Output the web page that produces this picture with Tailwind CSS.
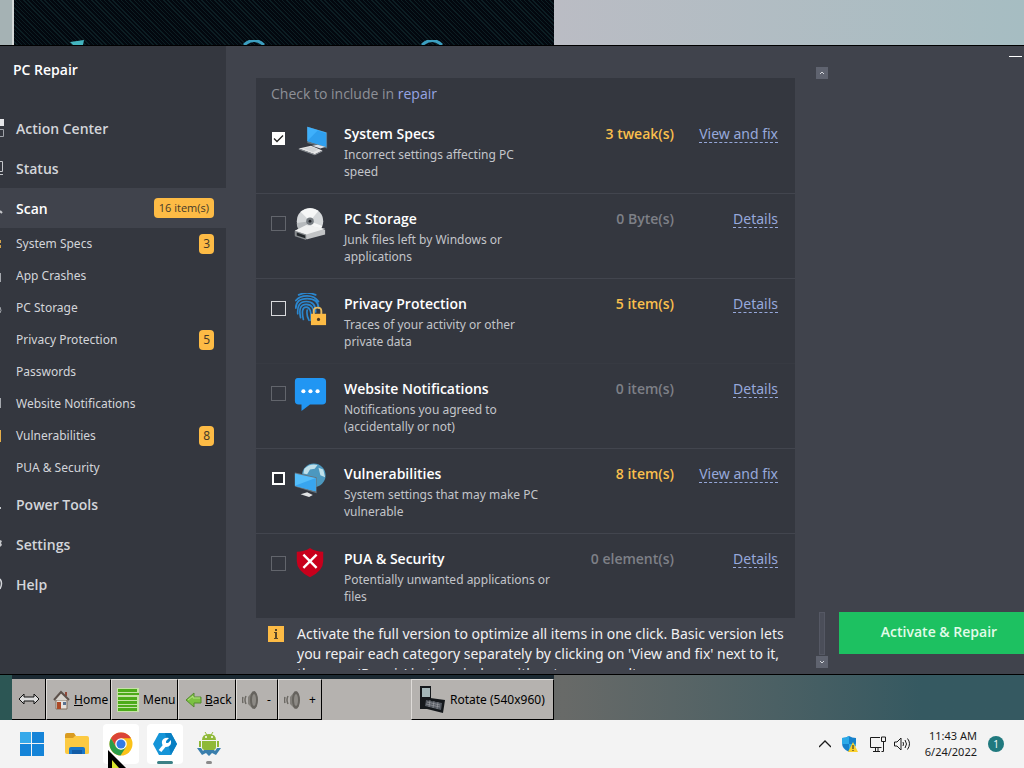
<!DOCTYPE html>
<html lang="en">
<head>
    <meta charset="UTF-8">
    <meta name="viewport" content="width=device-width, initial-scale=1.0">
    <title>PC Repair</title>
    <script src="https://cdn.jsdelivr.net/npm/@tailwindcss/browser@4"></script>
</head>
<body class="h-screen overflow-hidden flex flex-col bg-[#40434c] font-['Open_Sans','Noto_Sans',sans-serif] text-white">

    <!-- wallpaper and the top of the emulator window -->
    <div class="h-[45px] shrink-0 flex bg-linear-to-r from-[#a4b2b4] via-[#bcbcc4] to-[#a6bdc2]">
        <div class="w-3 bg-[#a5b2b4]"></div>
        <div class="w-[542px] border-l-2 border-[#d4d8d8] bg-[#03080f] bg-[repeating-linear-gradient(45deg,#03080f_0px,#03080f_2px,#0c1e23_2px,#0c1e23_3px)] flex items-end">
            <svg class="w-full h-[5px]" viewBox="0 0 540 5" preserveAspectRatio="xMinYMax slice">
                <path d="M56 2l14-2-1 5H59z" fill="#43b5c0"/>
                <path d="M230 5q10-9 20 0M408 5q10-9 20 0" fill="none" stroke="#3c9fc0" stroke-width="3"/>
            </svg>
        </div>
    </div>

    <!-- repair app -->
    <div class="flex-1 min-h-0 flex border-y border-black overflow-hidden">
        <aside class="w-[226px] shrink-0 bg-[#34373f] text-[#d3d5da]">
            <h1 class="h-[62px] pt-3 pl-[13px] text-[14px] leading-6 font-semibold text-white">PC Repair</h1>
            <nav class="text-[12px]">
                <a href="#" class="h-10 flex items-center gap-[11px] text-[14px] font-semibold">
                    <svg class="w-[5px] h-5" viewBox="0 0 5 20"><path d="M0 1h4v7H0z" fill="#e4e5e8"/><path d="M0 11.500h3.500v7H0" fill="none" stroke="#9fa2a8"/></svg>
                    Action Center
                </a>
                <a href="#" class="h-10 flex items-center gap-[11px] text-[14px] font-semibold">
                    <svg class="w-[5px] h-5" viewBox="0 0 5 20"><path d="M0 3.500h2.500v10H0M0 16.500h3" fill="none" stroke="#c5c7cb"/></svg>
                    Status
                </a>
                <a href="#" class="h-10 pr-3 flex items-center gap-[11px] text-[14px] font-semibold text-white bg-[#40434c]">
                    <svg class="w-[5px] h-5" viewBox="0 0 5 20"><path d="M0 13l2 2" stroke="#c5c7cb" stroke-width="2"/></svg>
                    Scan
                    <span class="ml-auto h-5 px-[5px] rounded bg-[#fdbb45] text-[11px] leading-5 font-normal text-[#453a29]">16 item(s)</span>
                </a>
                <div class="font-['Noto_Sans',sans-serif]">
                    <a href="#" class="h-8 pr-3 flex items-center gap-[11px]">
                        <svg class="w-[5px] h-5" viewBox="0 0 5 20"><path d="M0 6h1v3H0zM0 11h1v3H0z" fill="#d3a34b"/></svg>
                        System Specs
                        <span class="ml-auto h-5 px-1 rounded bg-[#fdbb45] leading-5 text-[#453a29]">3</span>
                    </a>
                    <a href="#" class="h-8 flex items-center gap-[11px]">
                        <svg class="w-[5px] h-5" viewBox="0 0 5 20"><path d="M.5 7v9" stroke="#a5a8ae"/></svg>
                        App Crashes
                    </a>
                    <a href="#" class="h-8 flex items-center gap-[11px]">
                        <svg class="w-[5px] h-5" viewBox="0 0 5 20"><path d="M0 9q2 4 0 6" fill="none" stroke="#a5a8ae"/></svg>
                        PC Storage
                    </a>
                    <a href="#" class="h-8 pr-3 pl-4 flex items-center">
                        Privacy Protection
                        <span class="ml-auto h-5 px-1 rounded bg-[#fdbb45] leading-5 text-[#453a29]">5</span>
                    </a>
                    <a href="#" class="h-8 pl-4 flex items-center">Passwords</a>
                    <a href="#" class="h-8 flex items-center gap-[11px]">
                        <svg class="w-[5px] h-5" viewBox="0 0 5 20"><path d="M.5 4v10" stroke="#a5a8ae"/></svg>
                        Website Notifications
                    </a>
                    <a href="#" class="h-8 pr-3 flex items-center gap-[11px]">
                        <svg class="w-[5px] h-5" viewBox="0 0 5 20"><path d="M.5 4v12" stroke="#e5ae49"/></svg>
                        Vulnerabilities
                        <span class="ml-auto h-5 px-1 rounded bg-[#fdbb45] leading-5 text-[#453a29]">8</span>
                    </a>
                    <a href="#" class="h-8 pl-4 flex items-center">PUA &amp; Security</a>
                </div>
                <a href="#" class="h-10 flex items-center gap-[11px] text-[14px] font-semibold">
                    <svg class="w-[5px] h-5" viewBox="0 0 5 20"><path d="M0 13h1v2H0z" fill="#c5c7cb"/></svg>
                    Power Tools
                </a>
                <a href="#" class="h-10 flex items-center gap-[11px] text-[14px] font-semibold">
                    <svg class="w-[5px] h-5" viewBox="0 0 5 20"><path d="M0 6l2 1-1 2 1 2-2 2z" fill="#c5c7cb"/></svg>
                    Settings
                </a>
                <a href="#" class="h-10 flex items-center gap-[11px] text-[14px] font-semibold">
                    <svg class="w-[5px] h-5" viewBox="0 0 5 20"><path d="M0 5q3 4 0 10" fill="none" stroke="#d3d5da" stroke-width="1.500"/></svg>
                    Help
                </a>
            </nav>
        </aside>

        <main class="flex-1 min-w-0 flex pl-[30px] pb-1">
            <div class="w-[539px] pt-8 overflow-hidden">
                <section class="bg-[#34373f] mb-[6px] pb-[1px]">
                    <p class="h-[31px] px-[15px] text-[14px] leading-8 text-[#8e9097]">Check to include in <a href="#" class="text-[#97a5e4]">repair</a></p>

                    <div class="h-[85px] flex items-start pt-[14px] pl-[15px] pr-[17px] border-b border-[#42454e]">
                        <label class="relative mt-2 w-[15px] h-[15px] shrink-0">
                            <input type="checkbox" checked aria-label="System Specs" class="block appearance-none w-[15px] h-[15px] bg-white border border-[#34373f]">
                            <svg class="absolute inset-0 w-[15px] h-[15px]" viewBox="0 0 15 15"><path d="M3 7.500l3 3 6-6" fill="none" stroke="#222" stroke-width="1.300"/></svg>
                        </label>
                        <svg class="ml-[9px] mt-[1px] w-[34px] h-[34px] shrink-0" viewBox="0 0 36 36">
                            <path d="M13 3l21 6v17l-21-6z" fill="#60727f"/>
                            <path d="M13 3l20 6v15l-20-6z" fill="#3eb0fb"/>
                            <path d="M13 18L24 7l9 3v14z" fill="#2f9fee"/>
                            <path d="M18 23l6-1 8 2-5 2z" fill="#dce1e8"/>
                            <path d="M4 26l13-3 12 5-8 4z" fill="#e5e5e6"/>
                            <path d="M4 26l17 6 8-4v1l-8 4-17-6z" fill="#8f949a"/>
                            <path d="M9 26l8-2 8 3-6 3z" fill="#d2d4d6"/>
                        </svg>
                        <div class="ml-[15px] flex-1">
                            <h2 class="text-[14px] leading-[22px] font-semibold">System Specs</h2>
                            <p class="mt-[1px] font-['Noto_Sans',sans-serif] text-[12px] leading-[17px] text-[#c3c5ca]">Incorrect settings affecting PC<br>speed</p>
                        </div>
                        <span class="text-[14px] leading-[22px] font-semibold text-[#f9bf4d]">3 tweak(s)</span>
                        <div class="mt-[2px] w-[104px] text-right font-['Noto_Sans',sans-serif] text-[14px] leading-[17px]"><a href="#" class="inline-block border-b border-dashed border-[#97a9dc] text-[#97a9dc]">View and fix</a></div>
                    </div>

                    <div class="h-[85px] flex items-start pt-[14px] pl-[15px] pr-[17px] border-b border-[#42454e]">
                        <input type="checkbox" aria-label="PC Storage" class="mt-2 appearance-none w-[15px] h-[15px] shrink-0 border border-[#62656c]">
                        <svg class="ml-[7px] w-[34px] h-[34px] shrink-0" viewBox="0 0 36 36">
                            <circle cx="18" cy="14" r="14" fill="#d5d8da"/>
                            <path d="M18 14L8 4q9-7 19-1zM18 14l13 5q-3 8-9 8z" fill="#f6f7f7"/>
                            <path d="M18 14L4 16q0 6 4 9z" fill="#b6babd"/>
                            <circle cx="18" cy="14" r="4" fill="#757b80"/>
                            <circle cx="18" cy="14" r="1.500" fill="#25282d"/>
                            <path d="M2 24l12-6 20 5v5l-19 5-13-4z" fill="#c1c3c5"/>
                            <path d="M2 24l12-6 20 4-20 6z" fill="#f0f1f1"/>
                            <path d="M2 24l12 4v6L2 30z" fill="#878b8e"/>
                            <path d="M4 26l9 3v3l-9-3z" fill="#24282c"/>
                        </svg>
                        <div class="ml-[17px] flex-1">
                            <h2 class="text-[14px] leading-[22px] font-semibold">PC Storage</h2>
                            <p class="mt-[1px] font-['Noto_Sans',sans-serif] text-[12px] leading-[17px] text-[#c3c5ca]">Junk files left by Windows or<br>applications</p>
                        </div>
                        <span class="text-[14px] leading-[22px] font-semibold text-[#7e8087]">0 Byte(s)</span>
                        <div class="mt-[2px] w-[104px] text-right font-['Noto_Sans',sans-serif] text-[14px] leading-[17px]"><a href="#" class="inline-block border-b border-dashed border-[#97a9dc] text-[#97a9dc]">Details</a></div>
                    </div>

                    <div class="h-[85px] flex items-start pt-[14px] pl-[15px] pr-[17px] border-b border-[#373a42]">
                        <input type="checkbox" aria-label="Privacy Protection" class="mt-2 appearance-none w-[15px] h-[15px] shrink-0 border border-[#d9dadd]">
                        <svg class="ml-[7px] w-[34px] h-[34px] shrink-0" viewBox="0 0 36 36">
                            <g fill="none" stroke="#2b87cf" stroke-width="1.800" stroke-linecap="round">
                                <path d="M6 2q9-4 18 0M3 8q4-5 12-5t12 6M3 16q0-10 12-10t12 10M5 22q-1-13 9-13t10 11M8 26q-3-14 6-14t8 13M11 28q-3-13 3-13t5 14M15 18q-1 6 2 11"/>
                            </g>
                            <path d="M22 23v-4q0-3.500 4-3.500t4 3.500v4" fill="none" stroke="#e7b95f" stroke-width="2"/>
                            <path d="M19 22h16v12H19z" fill="#fdbb45"/>
                            <circle cx="27" cy="28" r="1.700" fill="#4b3925"/>
                        </svg>
                        <div class="ml-[17px] flex-1">
                            <h2 class="text-[14px] leading-[22px] font-semibold">Privacy Protection</h2>
                            <p class="mt-[1px] font-['Noto_Sans',sans-serif] text-[12px] leading-[17px] text-[#c3c5ca]">Traces of your activity or other<br>private data</p>
                        </div>
                        <span class="text-[14px] leading-[22px] font-semibold text-[#f9bf4d]">5 item(s)</span>
                        <div class="mt-[2px] w-[104px] text-right font-['Noto_Sans',sans-serif] text-[14px] leading-[17px]"><a href="#" class="inline-block border-b border-dashed border-[#97a9dc] text-[#97a9dc]">Details</a></div>
                    </div>

                    <div class="h-[85px] flex items-start pt-[14px] pl-[15px] pr-[17px] border-b border-[#42454e]">
                        <input type="checkbox" aria-label="Website Notifications" class="mt-2 appearance-none w-[15px] h-[15px] shrink-0 border border-[#62656c]">
                        <svg class="ml-[7px] w-[34px] h-[34px] shrink-0" viewBox="0 0 36 36">
                            <path d="M5 0h26q4 0 4 4v20q0 4-4 4H18l-9 7v-7H6q-4 0-4-4V4q0-4 3-4z" fill="#2196f3"/>
                            <g fill="#fff"><circle cx="11" cy="14" r="2.200"/><circle cx="18.500" cy="14" r="2.200"/><circle cx="26" cy="14" r="2.200"/></g>
                        </svg>
                        <div class="ml-[17px] flex-1">
                            <h2 class="text-[14px] leading-[22px] font-semibold">Website Notifications</h2>
                            <p class="mt-[1px] font-['Noto_Sans',sans-serif] text-[12px] leading-[17px] text-[#c3c5ca]">Notifications you agreed to<br>(accidentally or not)</p>
                        </div>
                        <span class="text-[14px] leading-[22px] font-semibold text-[#7e8087]">0 item(s)</span>
                        <div class="mt-[2px] w-[104px] text-right font-['Noto_Sans',sans-serif] text-[14px] leading-[17px]"><a href="#" class="inline-block border-b border-dashed border-[#97a9dc] text-[#97a9dc]">Details</a></div>
                    </div>

                    <div class="h-[85px] flex items-start pt-[14px] pl-[15px] pr-[17px] border-b border-[#42454e]">
                        <div class="mt-2 w-[15px] h-[15px] shrink-0 p-[1px]">
                            <input type="checkbox" aria-label="Vulnerabilities" class="block appearance-none w-[13px] h-[13px] border-2 border-white bg-[#272a31]">
                        </div>
                        <svg class="ml-[7px] w-[34px] h-[34px] shrink-0" viewBox="0 0 36 36">
                            <circle cx="22" cy="13" r="12.500" fill="#4c98bf"/>
                            <path d="M12 6q6-6 14-4l-3 4-5 1-3 5-4-1zM27 5l5 2 2 8-5-2z" fill="#bfe0ea"/>
                            <path d="M2 10l23 5v17L2 25z" fill="#657580"/>
                            <path d="M2 11l22 5v14L2 24z" fill="#54bdfa"/>
                            <path d="M2 24l22-8v14z" fill="#38a5ef"/>
                            <path d="M8 33l7-2 6 3-4 2z" fill="#e1e3e4"/>
                        </svg>
                        <div class="ml-[17px] flex-1">
                            <h2 class="text-[14px] leading-[22px] font-semibold">Vulnerabilities</h2>
                            <p class="mt-[1px] font-['Noto_Sans',sans-serif] text-[12px] leading-[17px] text-[#c3c5ca]">System settings that may make PC<br>vulnerable</p>
                        </div>
                        <span class="text-[14px] leading-[22px] font-semibold text-[#f9bf4d]">8 item(s)</span>
                        <div class="mt-[2px] w-[104px] text-right font-['Noto_Sans',sans-serif] text-[14px] leading-[17px]"><a href="#" class="inline-block border-b border-dashed border-[#97a9dc] text-[#97a9dc]">View and fix</a></div>
                    </div>

                    <div class="h-[83px] flex items-start pt-[14px] pl-[15px] pr-[17px]">
                        <input type="checkbox" aria-label="PUA &amp; Security" class="mt-2 appearance-none w-[15px] h-[15px] shrink-0 border border-[#62656c]">
                        <svg class="ml-[7px] w-[34px] h-[34px] shrink-0" viewBox="0 0 36 36">
                            <path d="M18 0q6 4 14 4v10q0 10-14 17Q4 24 4 14V4q8 0 14-4z" fill="#c8001c"/>
                            <path d="M11 7l14 14M25 7L11 21" stroke="#fff" stroke-width="2.500"/>
                        </svg>
                        <div class="ml-[17px] flex-1">
                            <h2 class="text-[14px] leading-[22px] font-semibold">PUA &amp; Security</h2>
                            <p class="mt-[1px] font-['Noto_Sans',sans-serif] text-[12px] leading-[17px] text-[#c3c5ca]">Potentially unwanted applications or<br>files</p>
                        </div>
                        <span class="text-[14px] leading-[22px] font-semibold text-[#7e8087]">0 element(s)</span>
                        <div class="mt-[2px] w-[104px] text-right font-['Noto_Sans',sans-serif] text-[14px] leading-[17px]"><a href="#" class="inline-block border-b border-dashed border-[#97a9dc] text-[#97a9dc]">Details</a></div>
                    </div>
                </section>

                <div class="flex items-start gap-[13px] pl-3">
                    <svg class="mt-[2px] w-4 h-4 shrink-0" viewBox="0 0 16 16"><path d="M0 0h16v16H0z" fill="#fdbb45"/><path d="M7 3h2v2H7zM6 6h3v6h1v1H6v-1h1V7H6z" fill="#5a4628"/></svg>
                    <p class="font-['Noto_Sans',sans-serif] text-[14px] leading-5 whitespace-nowrap text-[#f0f0f2]">Activate the full version to optimize all items in one click. Basic version lets<br>you repair each category separately by clicking on 'View and fix' next to it,<br>then use 'Repair' in the window with category results.</p>
                </div>
            </div>

            <!-- scrollbar -->
            <div class="ml-[21px] mt-[21px] w-3 flex flex-col items-center">
                <button aria-label="Scroll up" class="w-3 h-3 bg-[#5f636f]"><svg viewBox="0 0 12 12"><path d="M4 7l2-2 2 2" fill="none" stroke="#d5d7dc"/></svg></button>
                <div class="mt-auto w-[6px] h-[43px] border border-[#555864] bg-[#4b4e59]"></div>
                <button aria-label="Scroll down" class="mt-[1px] mb-[2px] w-3 h-3 bg-[#5f636f]"><svg viewBox="0 0 12 12"><path d="M4 5l2 2 2-2" fill="none" stroke="#d5d7dc"/></svg></button>
            </div>

            <div class="ml-[11px] flex-1 flex flex-col">
                <button aria-label="Minimize" class="mt-[10px] mr-[2px] self-end w-[13px] h-[1px] bg-white"></button>
                <button class="mt-auto mb-4 h-[42px] pl-[15px] pb-[3px] bg-[#1dc161] text-[14px] font-semibold text-[#e2fbe9]">Activate &amp; Repair</button>
            </div>
        </main>
    </div>

    <!-- emulator toolbar -->
    <div class="h-[45px] shrink-0 flex bg-linear-to-r from-[#2c5654] from-1% via-[#686a68] via-55% to-[#355961] to-90% font-['Noto_Sans',sans-serif] text-[12px] text-black">
        <div class="ml-3 w-[542px] border-t-4 border-[#1b2932] bg-[#b5b2af] flex items-stretch">
            <button aria-label="Resize" class="w-[34px] flex items-center justify-center border-r border-b border-black bg-[#aeaaa7]">
                <svg class="w-[22px] h-3" viewBox="0 0 22 12"><path d="M1 6l5-5v3h10V1l5 5-5 5V8H6v3z" fill="#ddd" stroke="#111"/></svg>
            </button>
            <button class="w-[65px] flex items-center gap-1 pl-[6px] border-l border-t border-l-[#dedbd8] border-t-[#dedbd8] border-r border-b border-r-black border-b-black">
                <svg class="w-[17px] h-5 shrink-0" viewBox="0 0 17 20">
                    <path d="M3 10h11v9H3z" fill="#e7e4df" stroke="#84705f"/>
                    <path d="M12 2h2v4h-2z" fill="#934838"/>
                    <path d="M1 10l7-8 8 8" fill="#d7d3cd" stroke="#5c514b" stroke-width="2"/>
                    <path d="M4 12h4v7H4z" fill="#ad4a27"/><path d="M10 12h3v3h-3z" fill="#5a7290"/>
                </svg>
                <span><u>H</u>ome</span>
            </button>
            <button class="w-[67px] flex items-center gap-1 pl-[5px] border-l border-t border-l-[#dedbd8] border-t-[#dedbd8] border-r border-b border-r-black border-b-black">
                <svg class="w-[22px] h-6 shrink-0" viewBox="0 0 22 24"><path d="M0 0h22v24H0z" fill="#c5e3a6"/><path d="M1 1h19v3H1zM1 5h21v2H1zM1 9h19v3H1zM1 13h19v3H1zM1 17h19v2H1zM1 20h19v3H1z" fill="#4cab1a"/></svg>
                Menu
            </button>
            <button class="w-[58px] flex items-center gap-[3px] pl-[6px] border-l border-t border-l-[#dedbd8] border-t-[#dedbd8] border-r border-b border-r-black border-b-black">
                <svg class="w-[17px] h-4 shrink-0" viewBox="0 0 17 16"><path d="M1 8l8-7v4h7v6H9v4z" fill="#7cc142" stroke="#568a31"/><path d="M3 8l5-4v2h7" fill="none" stroke="#b6e284"/></svg>
                <span><u>B</u>ack</span>
            </button>
            <button class="w-[42px] flex items-center gap-2 pl-[5px] border-l border-t border-l-[#dedbd8] border-t-[#dedbd8] border-r border-b border-r-black border-b-black">
                <svg class="w-[17px] h-5 shrink-0" viewBox="0 0 17 20"><path d="M1 7q-1 3 0 6M4 6q-2 4 0 8" fill="none" stroke="#6c6964" stroke-width="1.500"/><path d="M6 7l5-6v18l-5-5z" fill="#83807b"/><ellipse cx="12" cy="10" rx="4" ry="9" fill="#66635e"/><ellipse cx="12" cy="10" rx="2" ry="6" fill="#8d8a85"/></svg>
                -
            </button>
            <button class="w-[44px] flex items-center gap-2 pl-[5px] border-l border-t border-l-[#dedbd8] border-t-[#dedbd8] border-r border-b border-r-black border-b-black">
                <svg class="w-[17px] h-5 shrink-0" viewBox="0 0 17 20"><path d="M1 7q-1 3 0 6M4 6q-2 4 0 8" fill="none" stroke="#6c6964" stroke-width="1.500"/><path d="M6 7l5-6v18l-5-5z" fill="#83807b"/><ellipse cx="12" cy="10" rx="4" ry="9" fill="#66635e"/><ellipse cx="12" cy="10" rx="2" ry="6" fill="#8d8a85"/></svg>
                +
            </button>
            <button class="ml-auto w-[143px] flex items-center gap-[5px] pl-2 whitespace-nowrap border-l border-t border-l-[#dedbd8] border-t-[#dedbd8] border-r border-b border-r-black border-b-black">
                <svg class="w-[25px] h-[29px] shrink-0" viewBox="0 0 25 29">
                    <path d="M0 1h11v23H0z" fill="#15181c"/><path d="M2 3h8v9H2z" fill="#a4b5b8"/>
                    <path d="M3 12l22 3-2 13-20-5z" fill="#15181c"/><path d="M6 15l16 3-1 7-16-4z" fill="#545961"/>
                    <path d="M7 17l13 3M6 19l14 3M10 15l-1 7M14 16l-1 7M18 17l-1 7" stroke="#a2a5aa" stroke-width=".6"/>
                </svg>
                Rotate (540x960)
            </button>
        </div>
    </div>

    <!-- taskbar -->
    <footer class="relative h-12 shrink-0 flex items-center pl-[14px] pr-5 bg-[#f3f3f3] text-[#1b1b1b]">
        <button aria-label="Start" class="w-9 h-10 flex items-center justify-center">
            <svg class="w-6 h-6" viewBox="0 0 24 24"><path d="M0 0h11v11H0zM12 0h12v11H12zM0 12h11v12H0zM12 12h12v12H12z" fill="#1584d8"/><path d="M0 0h11v11H0z" fill="#36a9ea"/></svg>
        </button>
        <button aria-label="File Explorer" class="ml-[9px] w-9 h-10 flex items-center justify-center">
            <svg class="w-6 h-6" viewBox="0 0 24 24"><path d="M0 3q0-2 2-2h7l2 3v5H0z" fill="#d99b21"/><path d="M0 6h8l2-2h12q2 0 2 2v15q0 1-2 1H2q-2 0-2-2z" fill="#fcca42"/><path d="M4 22v-5q0-2 2-2h12q2 0 2 2v5z" fill="#1977c9"/><path d="M7 18h10v4H7z" fill="#135ca6"/></svg>
        </button>
        <button aria-label="Chrome" class="ml-2 w-9 h-10 rounded bg-white flex items-center justify-center">
            <svg class="w-6 h-6" viewBox="0 0 24 24">
                <circle cx="12" cy="12" r="11.500" fill="#fbc219"/>
                <path d="M2 6.300A11.500 11.500 0 0 1 22 6.300H12L7 15z" fill="#db4437"/>
                <path d="M2 6.300A11.500 11.500 0 0 0 11.500 23.500L17 15 12 17.500 7 15z" fill="#2b9c4a"/>
                <circle cx="12" cy="12" r="5.800" fill="#fff"/><circle cx="12" cy="12" r="4.500" fill="#347be5"/>
            </svg>
        </button>
        <button aria-label="PC Repair" class="relative ml-2 w-9 h-10 rounded bg-white flex items-center justify-center">
            <svg class="w-6 h-6" viewBox="0 0 24 24"><path d="M6 1h12l6 11-6 11H6L0 12z" fill="#1695d8"/><path d="M12 1h6l6 11-6 11z" fill="#087fc3"/><path d="M7 19l5-6" stroke="#fff" stroke-width="3.500"/><path d="M16 6l-3 3v2h2l3-3q1 7-5 7-5-1-4-6 2-4 7-3z" fill="#fff"/></svg>
            <span class="absolute bottom-0 left-[10px] w-4 h-[3px] rounded-full bg-[#3b8186]"></span>
        </button>
        <button aria-label="Emulator" class="relative ml-2 w-9 h-10 flex items-center justify-center">
            <svg class="w-6 h-6" viewBox="0 0 24 24"><path d="M0 16h4l2 3 2-2h8l2 2 2-3h4l-5 7-4-2-3 3-3-3-4 2z" fill="#397eac"/><path d="M5 8q0-6 7-6t7 6zM5 9h14v6q0 3-3 3H8q-3 0-3-3zM2 9h2v6H2zM20 9h2v6h-2z" fill="#8fb938"/><path d="M8 0l2 3M16 0l-2 3" stroke="#8fb938"/><circle cx="9" cy="5" r="1" fill="#fff"/><circle cx="15" cy="5" r="1" fill="#fff"/></svg>
            <span class="absolute bottom-0 left-[15px] w-[6px] h-[3px] rounded-full bg-[#8a8a8a]"></span>
        </button>

        <div class="ml-auto flex items-center">
            <svg class="w-3 h-3" viewBox="0 0 12 12"><path d="M0 9l6-6 6 6" fill="none" stroke="#1b1b1b" stroke-width="1.300"/></svg>
            <svg class="ml-[11px] w-4 h-4" viewBox="0 0 16 16"><path d="M7 0q3 2 7 2v5q0 6-7 9-7-3-7-9V2q4 0 7-2z" fill="#1681cb"/><path d="M7 0v8H0V2q4 0 7-2zM7 8h7q-1 5-7 8z" fill="#2caae8"/><path d="M11 6l5 10H6z" fill="#fcd12b"/><path d="M10.500 9h1v4h-1zM10.500 14h1v1h-1z" fill="#222"/></svg>
            <svg class="ml-[11px] w-[17px] h-4" viewBox="0 0 17 16"><path d="M11 1.500H1.500v10h11M4 15.500h7M6.500 12v3M9 12v3M14.500 6v9.500h-2M12.500 1v4.500h4V1z" fill="none" stroke="#1b1b1b"/></svg>
            <svg class="ml-2 w-[17px] h-4" viewBox="0 0 17 16"><path d="M.5 6h2.500l4-4v12l-4-4H.5zM9 6q1 2 0 4M11 4q3 4 0 8M13.500 2.500q4 5 0 11" fill="none" stroke="#1b1b1b"/></svg>
            <p class="ml-[14px] font-['Noto_Sans',sans-serif] text-[11px] leading-4 text-right">11:43 AM<br>6/24/2022</p>
            <span class="ml-[11px] w-4 h-4 rounded-full bg-[#20797e] text-[10px] leading-4 text-center text-white">1</span>
        </div>

        <!-- mouse pointer -->
        <svg class="absolute bottom-0 left-[107px] w-5 h-[18px]" viewBox="0 0 20 18"><path d="M1 0v18h18z" fill="#000"/><path d="M5 10v8h7z" fill="#d9e52e"/></svg>
    </footer>
</body>
</html>
